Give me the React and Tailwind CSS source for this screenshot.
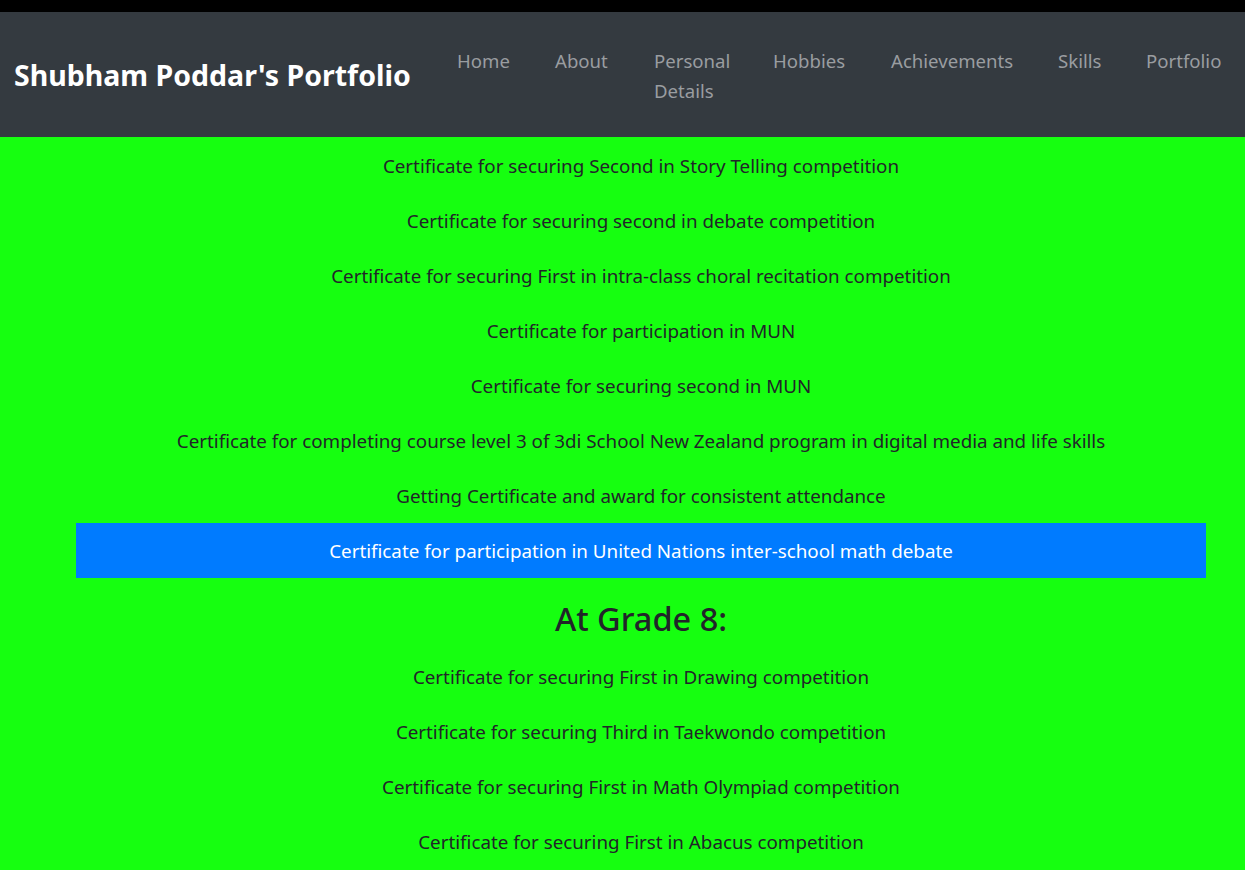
import React from 'react'

const grade9 = [
  'Certificate for securing Second in Story Telling competition',
  'Certificate for securing second in debate competition',
  'Certificate for securing First in intra-class choral recitation competition',
  'Certificate for participation in MUN',
  'Certificate for securing second in MUN',
  'Certificate for completing course level 3 of 3di School New Zealand program in digital media and life skills',
  'Getting Certificate and award for consistent attendance',
  'Certificate for participation in United Nations inter-school math debate',
]

const grade8 = [
  'Certificate for securing First in Drawing competition',
  'Certificate for securing Third in Taekwondo competition',
  'Certificate for securing First in Math Olympiad competition',
  'Certificate for securing First in Abacus competition',
]

const links = [
  { name: 'Home', w: 'w-[53px]' },
  { name: 'About', w: 'w-[54px]' },
  { name: 'Personal Details', w: 'w-[74px]' },
  { name: 'Hobbies', w: 'w-[73px]' },
  { name: 'Achievements', w: 'w-[122px]' },
  { name: 'Skills', w: 'w-[43px]' },
  { name: 'Portfolio', w: 'w-[75px]' },
]

function Item({ text, active }) {
  return (
    <li
      className={`h-[55px] pt-[2px] flex items-center justify-center text-center text-[18.8px] ${
        active ? 'bg-[#007bff] text-white' : 'text-[#212529]'
      }`}
    >
      {text}
    </li>
  )
}

export default function App() {
  return (
    <div className="min-h-[870px] bg-[#16ff10] font-['Noto_Sans',sans-serif]">
      <div className="h-[12px] bg-black" />
      <nav className="h-[125px] bg-[#343a40] flex items-center justify-between pl-[14px] pr-[24px]">
        <a className="text-white font-bold text-[28.5px] leading-none whitespace-nowrap pt-[2px]">
          Shubham Poddar's Portfolio
        </a>
        <ul className="flex gap-[45px] self-start pt-[34px]">
          {links.map(l => (
            <li key={l.name} className={`${l.w} text-[18.6px] leading-[30px] text-[#9a9da0] whitespace-nowrap`}>
              {l.name === 'Personal Details' ? (
                <>Personal<br />Details</>
              ) : (
                l.name
              )}
            </li>
          ))}
        </ul>
      </nav>

      <div className="ml-[76px] w-[1130px] pt-[1px]">
        <ul>
          {grade9.map((t, i) => (
            <Item key={t} text={t} active={i === grade9.length - 1} />
          ))}
        </ul>
        <h2 className="pt-[22px] pb-[11px] text-center text-[32.5px] leading-[38px] font-medium text-[#212529]">
          At Grade 8:
        </h2>
        <ul>
          {grade8.map(t => (
            <Item key={t} text={t} />
          ))}
        </ul>
      </div>
    </div>
  )
}
